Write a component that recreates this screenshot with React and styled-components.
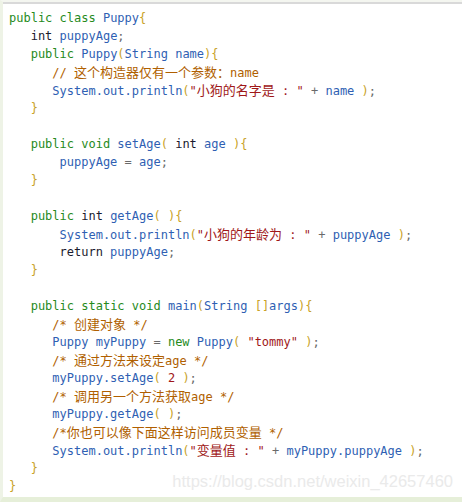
import React from "react";
import styled, { createGlobalStyle } from "styled-components";

const Global = createGlobalStyle`
  html, body { margin: 0; padding: 0; background: #fff; }
`;

const colors = {
  kw: "#268a1c",
  ty: "#1a1a2e",
  id: "#2f5fb3",
  cm: "#b05f00",
  st: "#a01818",
  pn: "#c9a227",
  op: "#6a6a6a",
  nu: "#a01818",
};

// lines of [type, text]
const code = [
  [0, [["kw", "public class "], ["id", "Puppy"], ["pn", "{"]]],
  [1, [["ty", "int "], ["id", "puppyAge"], ["op", ";"]]],
  [1, [["kw", "public "], ["id", "Puppy"], ["pn", "("], ["id", "String name"], ["pn", "){"]]],
  [2, [["cm", "// 这个构造器仅有一个参数：name"]]],
  [2, [["id", "System.out.println"], ["pn", "("], ["st", "\"小狗的名字是 : \""], ["op", " + "], ["id", "name"], ["pn", " )"], ["op", ";"]]],
  [1, [["pn", "}"]]],
  [0, []],
  [1, [["kw", "public void "], ["id", "setAge"], ["pn", "( "], ["ty", "int "], ["id", "age"], ["pn", " ){"]]],
  [3, [["id", "puppyAge"], ["op", " = "], ["id", "age"], ["op", ";"]]],
  [1, [["pn", "}"]]],
  [0, []],
  [1, [["kw", "public "], ["ty", "int "], ["id", "getAge"], ["pn", "( ){"]]],
  [3, [["id", "System.out.println"], ["pn", "("], ["st", "\"小狗的年龄为 : \""], ["op", " + "], ["id", "puppyAge"], ["pn", " )"], ["op", ";"]]],
  [3, [["ty", "return "], ["id", "puppyAge"], ["op", ";"]]],
  [1, [["pn", "}"]]],
  [0, []],
  [1, [["kw", "public static void "], ["id", "main"], ["pn", "("], ["id", "String "], ["pn", "[]"], ["id", "args"], ["pn", "){"]]],
  [2, [["cm", "/* 创建对象 */"]]],
  [2, [["id", "Puppy myPuppy"], ["op", " = "], ["kw", "new "], ["id", "Puppy"], ["pn", "( "], ["st", "\"tommy\""], ["pn", " )"], ["op", ";"]]],
  [2, [["cm", "/* 通过方法来设定age */"]]],
  [2, [["id", "myPuppy.setAge"], ["pn", "( "], ["nu", "2"], ["pn", " )"], ["op", ";"]]],
  [2, [["cm", "/* 调用另一个方法获取age */"]]],
  [2, [["id", "myPuppy.getAge"], ["pn", "( )"], ["op", ";"]]],
  [2, [["cm", "/*你也可以像下面这样访问成员变量 */"]]],
  [2, [["id", "System.out.println"], ["pn", "("], ["st", "\"变量值 : \""], ["op", " + "], ["id", "myPuppy.puppyAge"], ["pn", " )"], ["op", ";"]]],
  [1, [["pn", "}"]]],
  [0, [["pn", "}"]]],
];

const indents = [0, 3, 6, 7];

const splitCjk = (text) => text.split(/([\u3000-\u9fff\uff00-\uffef]+)/);

const App = () => {
  return (
    <>
      <Global />
      <Frame>
        <Code>
          {code.map(([level, tokens], i) => (
            <Line key={i} $indent={indents[level]}>
              {tokens.map(([type, text], j) => (
                <Tok key={j} $type={type}>
                  {splitCjk(text).map((part, k) =>
                    k % 2 === 1 ? <Cjk key={k}>{part}</Cjk> : part
                  )}
                </Tok>
              ))}
            </Line>
          ))}
        </Code>
        <Watermark>https://blog.csdn.net/weixin_42657460</Watermark>
      </Frame>
    </>
  );
};

export default App;

const Frame = styled.div`
  position: relative;
  width: 462px;
  height: 502px;
  box-sizing: border-box;
  border-top: 2px solid #f4f6f0;
  border-left: 3px solid #eef3e6;
  border-bottom: 5px solid #e6efd9;
  background: #fff;
  overflow: hidden;
  &::before {
    content: "";
    position: absolute;
    left: 0;
    right: 0;
    top: 0;
    height: 2px;
    background: #d9d9d9;
  }
`;

const Code = styled.div`
  display: flex;
  flex-direction: column;
  padding: 7px 0 0 6px;
  font-family: "DejaVu Sans Mono", "Liberation Mono", monospace;
  font-size: 12px;
  line-height: 18px;
  white-space: pre;
`;

const Line = styled.div`
  height: 18px;
  padding-left: ${(p) => p.$indent * 7.22}px;
`;

const Tok = styled.span`
  color: ${(p) => colors[p.$type]};
`;

const Cjk = styled.span`
  font-family: "Noto Sans CJK SC", sans-serif;
  font-size: 13px;
`;

const Watermark = styled.div`
  position: absolute;
  right: 9px;
  bottom: 6px;
  font-family: "Liberation Sans", Arial, sans-serif;
  font-size: 16.5px;
  color: #eaeaea;
`;
